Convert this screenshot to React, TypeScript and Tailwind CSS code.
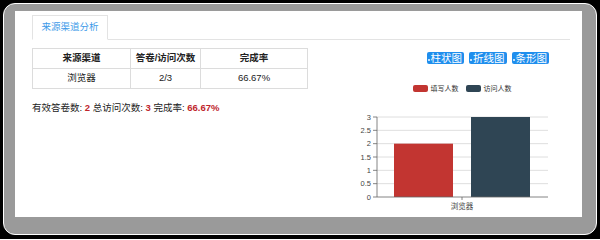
import React from "react";

const FONT = "font-['Liberation_Sans','Noto_Sans_CJK_SC',sans-serif]";

const ROWS = [{ channel: "浏览器", ratio: "2/3", rate: "66.67%" }];

const CHART_BUTTONS = ["柱状图", "折线图", "条形图"];

const SERIES = [
  { name: "填写人数", value: 2, color: "#c23531" },
  { name: "访问人数", value: 3, color: "#2f4554" },
];

function BarChart() {
  const top = 5;
  const bottom = 85;
  const left = 27;
  const right = 198;
  const max = 3;
  const y = (v: number) => bottom - ((bottom - top) * v) / max;
  const ticks = [0, 0.5, 1, 1.5, 2, 2.5, 3];
  const bars = [
    { x: 44, w: 59, ...SERIES[0] },
    { x: 121, w: 59, ...SERIES[1] },
  ];

  return (
    <svg width="200" height="100" viewBox="0 0 200 100" className="block">
      {ticks.map((t) => (
        <g key={t}>
          {t > 0 ? (
            <line x1={left} x2={right} y1={y(t)} y2={y(t)} stroke="#d6d6d6" strokeWidth="0.8" />
          ) : null}
          <line x1={left - 4} x2={left} y1={y(t)} y2={y(t)} stroke="#666" strokeWidth="0.8" />
          <text
            x={left - 6}
            y={y(t) + 2.6}
            textAnchor="end"
            fontSize="7.5"
            fill="#444"
            fontFamily="Liberation Sans, sans-serif"
          >
            {t}
          </text>
        </g>
      ))}
      {bars.map((b) => (
        <rect key={b.name} x={b.x} y={y(b.value)} width={b.w} height={bottom - y(b.value)} fill={b.color} />
      ))}
      <line x1={left} x2={left} y1={top} y2={bottom} stroke="#666" strokeWidth="0.8" />
      <line x1={left} x2={right} y1={bottom} y2={bottom} stroke="#666" strokeWidth="0.8" />
      <line x1={112} x2={112} y1={bottom} y2={bottom + 3} stroke="#666" strokeWidth="0.8" />
      <text
        x={112}
        y={97}
        textAnchor="middle"
        fontSize="7.5"
        fill="#444"
        fontFamily="Noto Sans CJK SC, sans-serif"
      >
        浏览器
      </text>
    </svg>
  );
}

export default function App() {
  return (
    <div className={`h-[239px] w-[600px] bg-black pt-[3px] pl-[3px] pr-[3px] pb-[4px] ${FONT}`}>
      <div className="flex h-full flex-col rounded-[12px] border border-white bg-[#9a9a9a] pt-[7px] pl-[11px] pr-[14px] pb-[17px]">
        <div className="flex flex-1 flex-col bg-white pt-[4px]">
          {/* tab bar */}
          <div className="ml-[17px] mr-[12px] flex border-b border-[#e3e3e3]">
            <div className="-mb-px flex h-[25px] w-[76px] items-center justify-center border border-b-white border-[#e3e3e3] bg-white text-[9.5px] text-[#3d9ae8]">
              来源渠道分析
            </div>
          </div>

          <div className="flex">
            {/* left: table + summary */}
            <div className="ml-[17px] mt-[8px] w-[276px]">
              <table className="w-full border-collapse text-[9.5px] text-[#222]">
                <thead>
                  <tr className="h-[20px]">
                    <th className="w-[98px] border border-[#dcdcdc] font-bold">来源渠道</th>
                    <th className="w-[70px] border border-[#dcdcdc] font-bold">答卷/访问次数</th>
                    <th className="border border-[#dcdcdc] font-bold">完成率</th>
                  </tr>
                </thead>
                <tbody>
                  {ROWS.map((r) => (
                    <tr key={r.channel} className="h-[20px] text-center">
                      <td className="border border-[#dcdcdc]">{r.channel}</td>
                      <td className="border border-[#dcdcdc]">{r.ratio}</td>
                      <td className="border border-[#dcdcdc]">{r.rate}</td>
                    </tr>
                  ))}
                </tbody>
              </table>
              <p className="mt-[13px] text-[9.5px] leading-[12px] text-[#222]">
                有效答卷数: <span className="font-bold text-[#c0262c]">2</span> 总访问次数:{" "}
                <span className="font-bold text-[#c0262c]">3</span> 完成率:{" "}
                <span className="font-bold text-[#c0262c]">66.67%</span>
              </p>
            </div>

            {/* right: chart controls + chart */}
            <div className="ml-[42px] w-[200px]">
              <div className="mt-[12px] flex justify-end gap-[5px] pr-[1px]">
                {CHART_BUTTONS.map((label) => (
                  <span
                    key={label}
                    className="flex h-[12px] items-center rounded-[2px] bg-[#1f8eed] pl-[1px] pr-[2px] text-[10.5px] leading-none text-white"
                  >
                    <span className="mr-[1px] mt-[4px] h-[2px] w-[2px] bg-[#bfe0fb]" />
                    {label}
                  </span>
                ))}
              </div>

              <div className="mt-[21px] flex items-center justify-center gap-[3px] pl-[24px] text-[7px] leading-none text-[#333]">
                {SERIES.map((s, i) => (
                  <div key={s.name} className={`flex items-center gap-[3px] ${i > 0 ? "ml-[4px]" : ""}`}>
                    <span className="h-[7px] w-[15px] rounded-[2px]" style={{ backgroundColor: s.color }} />
                    <span>{s.name}</span>
                  </div>
                ))}
              </div>

              <div className="mt-[20px]">
                <BarChart />
              </div>
            </div>
          </div>
        </div>
      </div>
    </div>
  );
}
